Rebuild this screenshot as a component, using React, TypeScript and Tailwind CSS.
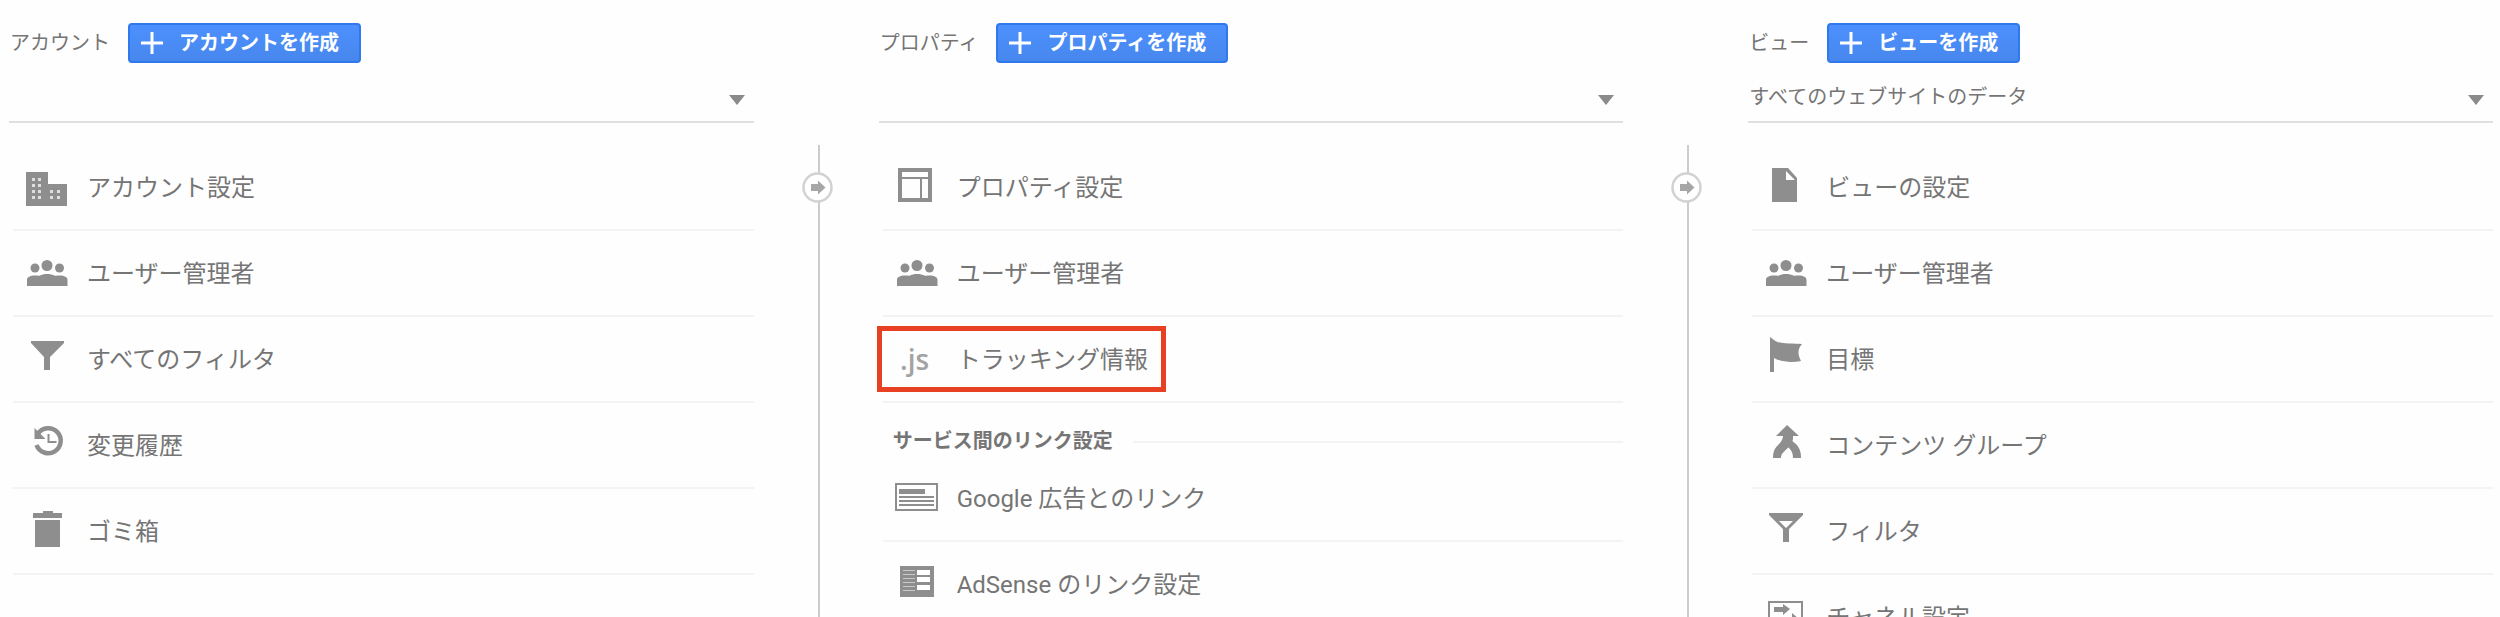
import React from "react";

type Item = {
  label: string;
  icon: React.ReactNode;
  highlighted?: boolean;
};

const Icon = ({ children }: { children: React.ReactNode }) => (
  <svg
    className="w-11 h-11 shrink-0"
    viewBox="0 0 44 44"
    fill="#8e8e8e"
    aria-hidden="true"
  >
    {children}
  </svg>
);

const BuildingIcon = () => (
  <Icon>
    <path d="M1 7h22v12h19v22H1z" />
    <g fill="#dedede">
      <path d="M7 13h3v3H7zM13 13h3v3h-3zM7 19h3v3H7zM13 19h3v3h-3zM7 25h3v3H7zM13 25h3v3h-3zM7 31h3v3H7zM13 31h3v3h-3z" />
      <path d="M25 25h3v3h-3zM32 25h3v3h-3zM25 31h3v3h-3zM32 31h3v3h-3z" />
    </g>
  </Icon>
);

const UsersIcon = () => (
  <Icon>
    <circle cx="10" cy="17" r="4.5" />
    <circle cx="22" cy="14.5" r="5.5" />
    <circle cx="34.5" cy="17" r="4.5" />
    <path d="M2 35v-6c0-3 3-4.500 8-4.500 2 0 3 0 4.500.3 4-2.400 11-2.400 15.500 0 1.500-.3 2.500-.3 4.500-.3 5 0 8 1.500 8 4.500v6z" />
  </Icon>
);

const FilterIcon = () => (
  <Icon>
    <path d="M6 4h33v2L25 20v13h-6V20L6 6z" />
  </Icon>
);

const FilterOutlineIcon = () => (
  <Icon>
    <path
      fillRule="evenodd"
      d="M5 4h34v2L25 20v13h-6V20L5 6zM15 12l7 7 7-7z"
    />
  </Icon>
);

const HistoryIcon = () => (
  <Icon>
    <path
      d="M13 10.500A12.500 12.500 0 1 1 11.500 22"
      fill="none"
      stroke="#8e8e8e"
      strokeWidth="4.5"
    />
    <path d="M9.500 5v11h11z" />
    <path d="M23.500 11v8h8" fill="none" stroke="#8e8e8e" strokeWidth="2" />
  </Icon>
);

const TrashIcon = () => (
  <Icon>
    <path d="M18 2h10v2h9v5H8V4h10zM10 11h25v27H10z" />
  </Icon>
);

const LayoutIcon = () => (
  <Icon>
    <path fillRule="evenodd" d="M3 3h34v34H3zM7 7v26h26V7z" />
    <path d="M7 12h26v2H7zM25 14h2v19h-2z" />
  </Icon>
);

const JsIcon = () => (
  <span className="w-11 h-11 shrink-0 flex items-center justify-center pr-1 font-['Open_Sans'] text-[28px] leading-none font-semibold text-[#a3a3a3]">
    .js
  </span>
);

const AdsIcon = () => (
  <Icon>
    <path fillRule="evenodd" d="M0 7h43v28H0zM2 9v24h39V9z" />
    <path d="M4 13h26v5H4zM4 20h35v2H4zM4 24h35v2H4zM4 28h35v2H4z" />
  </Icon>
);

const AdSenseIcon = () => (
  <Icon>
    <path d="M5 4h34v31H5z" />
    <path
      d="M22 8h13v5H22zM22 15h13v5H22zM22 23h13v5H22z"
      fill="#fff"
    />
    <path
      d="M8 8h12v1H8zM8 12h12v1H8zM8 16h12v1H8zM8 20h12v1H8zM8 24h12v1H8zM8 28h12v1H8z"
      fill="#c8c8c8"
    />
  </Icon>
);

const FileIcon = () => (
  <Icon>
    <path fillRule="evenodd" d="M8 3h16l9 10v24H8zM22 6v9h9z" />
  </Icon>
);

const FlagIcon = () => (
  <Icon>
    <path d="M6 0l4 3c4 4 17 3.500 28 4-4 5-5 9-1 17-8 1.500-19 1.500-27-3v14H6z" />
  </Icon>
);

const MergeIcon = () => (
  <Icon>
    <path d="M23 2l12 11h-6c1 12-12 14-12 22H9c0-14 9-12 10-22h-7z" />
    <path d="M28 18c6 4 9 8 9 17h-8c0-6-2-8-5-11z" />
  </Icon>
);

const ChannelIcon = () => (
  <Icon>
    <path fillRule="evenodd" d="M4 6h35v30H4zM6 8v26h31V8z" />
    <path d="M10 12h9V9l7 5-7 6v-3h-9zM28 18l7 6-7 6v-3H18v-5h10z" />
  </Icon>
);

const accountItems: Item[] = [
  { label: "アカウント設定", icon: <BuildingIcon /> },
  { label: "ユーザー管理者", icon: <UsersIcon /> },
  { label: "すべてのフィルタ", icon: <FilterIcon /> },
  { label: "変更履歴", icon: <HistoryIcon /> },
  { label: "ゴミ箱", icon: <TrashIcon /> },
];

const propertyItems: Item[] = [
  { label: "プロパティ設定", icon: <LayoutIcon /> },
  { label: "ユーザー管理者", icon: <UsersIcon /> },
  { label: "トラッキング情報", icon: <JsIcon />, highlighted: true },
];

const linkItems: Item[] = [
  { label: "Google 広告とのリンク", icon: <AdsIcon /> },
  { label: "AdSense のリンク設定", icon: <AdSenseIcon /> },
];

const viewItems: Item[] = [
  { label: "ビューの設定", icon: <FileIcon /> },
  { label: "ユーザー管理者", icon: <UsersIcon /> },
  { label: "目標", icon: <FlagIcon /> },
  { label: "コンテンツ グループ", icon: <MergeIcon /> },
  { label: "フィルタ", icon: <FilterOutlineIcon /> },
  { label: "チャネル設定", icon: <ChannelIcon /> },
];

const ItemList = ({ items }: { items: Item[] }) => (
  <ul className="ml-1">
    {items.map((item) => (
      <li key={item.label} className="h-[86px] border-b-2 border-[#f3f3f3]">
        <a
          href="#"
          className="relative inline-flex h-full items-center gap-[18px] pl-3 text-2xl whitespace-nowrap"
        >
          {item.icon}
          <span className="pt-0.5">{item.label}</span>
          {/* Red frame */}
          {item.highlighted && (
            <span className="absolute -left-1.5 -right-[18px] inset-y-[9px] border-[5px] border-[#e84023]" />
          )}
        </a>
      </li>
    ))}
  </ul>
);

type ColumnProps = {
  id: string;
  title: string;
  button: string;
  selected?: string;
  children: React.ReactNode;
};

const Column = ({ id, title, button, selected = "", children }: ColumnProps) => (
  <section className="min-w-0">
    <div className="flex items-center gap-[18px] pl-px pt-[23px] text-xl">
      <label htmlFor={id} className="whitespace-nowrap">
        {title}
      </label>
      <button className="flex h-10 items-center gap-4 rounded-[4px] border-2 border-[#3079ed] bg-linear-to-b from-[#4d90fe] to-[#4787ed] pl-[11px] pr-5 font-bold text-white whitespace-nowrap">
        <svg className="w-[22px] h-[22px]" viewBox="0 0 22 22" aria-hidden="true">
          <path d="M11 0v22M0 11h22" stroke="#fff" strokeWidth="3" />
        </svg>
        {button}
      </button>
    </div>

    {/* Selector */}
    <div className="relative mt-[10px]">
      <select
        id={id}
        className="block h-[50px] w-full appearance-none border-b-2 border-[#e0e0e0] bg-transparent pl-px pr-8 text-xl"
      >
        <option>{selected}</option>
      </select>
      <svg
        className="pointer-events-none absolute right-[9px] top-[22px] w-4 h-[10px]"
        viewBox="0 0 16 10"
        fill="#8a8a8a"
        aria-hidden="true"
      >
        <path d="M0 0h16L8 10z" />
      </svg>
    </div>

    <div className="mt-[22px]">{children}</div>
  </section>
);

const Rail = () => (
  <div className="relative pl-16 pt-[145px]">
    <div className="h-full border-l-2 border-[#cccccc]" />
    <svg
      className="absolute left-12 top-[172px] w-[31px] h-[31px]"
      viewBox="0 0 31 31"
      aria-hidden="true"
    >
      <circle cx="15.5" cy="15.5" r="14" fill="#fff" stroke="#d2d2d2" strokeWidth="2.5" />
      <path d="M9 12h7V8.500l7.500 7-7.500 7V19H9z" fill="#a6a6a6" />
    </svg>
  </div>
);

const App = () => {
  return (
    <main className="grid h-screen grid-cols-[1fr_125px_1fr_125px_1fr] overflow-hidden bg-[#fefefe] pl-[9px] pr-[7px] font-[Roboto,'Noto_Sans_CJK_JP',sans-serif] text-[#757575]">
      <Column id="account" title="アカウント" button="アカウントを作成">
        <ItemList items={accountItems} />
      </Column>
      <Rail />
      <Column id="property" title="プロパティ" button="プロパティを作成">
        <ItemList items={propertyItems} />
        <div className="ml-1 flex items-center gap-5 pl-[10px] pt-6">
          <h2 className="text-xl leading-[29px] font-bold whitespace-nowrap">
            サービス間のリンク設定
          </h2>
          <div className="flex-1 border-t-2 border-[#f3f3f3]" />
        </div>
        <ItemList items={linkItems} />
      </Column>
      <Rail />
      <Column
        id="view"
        title="ビュー"
        button="ビューを作成"
        selected="すべてのウェブサイトのデータ"
      >
        <ItemList items={viewItems} />
      </Column>
    </main>
  );
};

export default App;
